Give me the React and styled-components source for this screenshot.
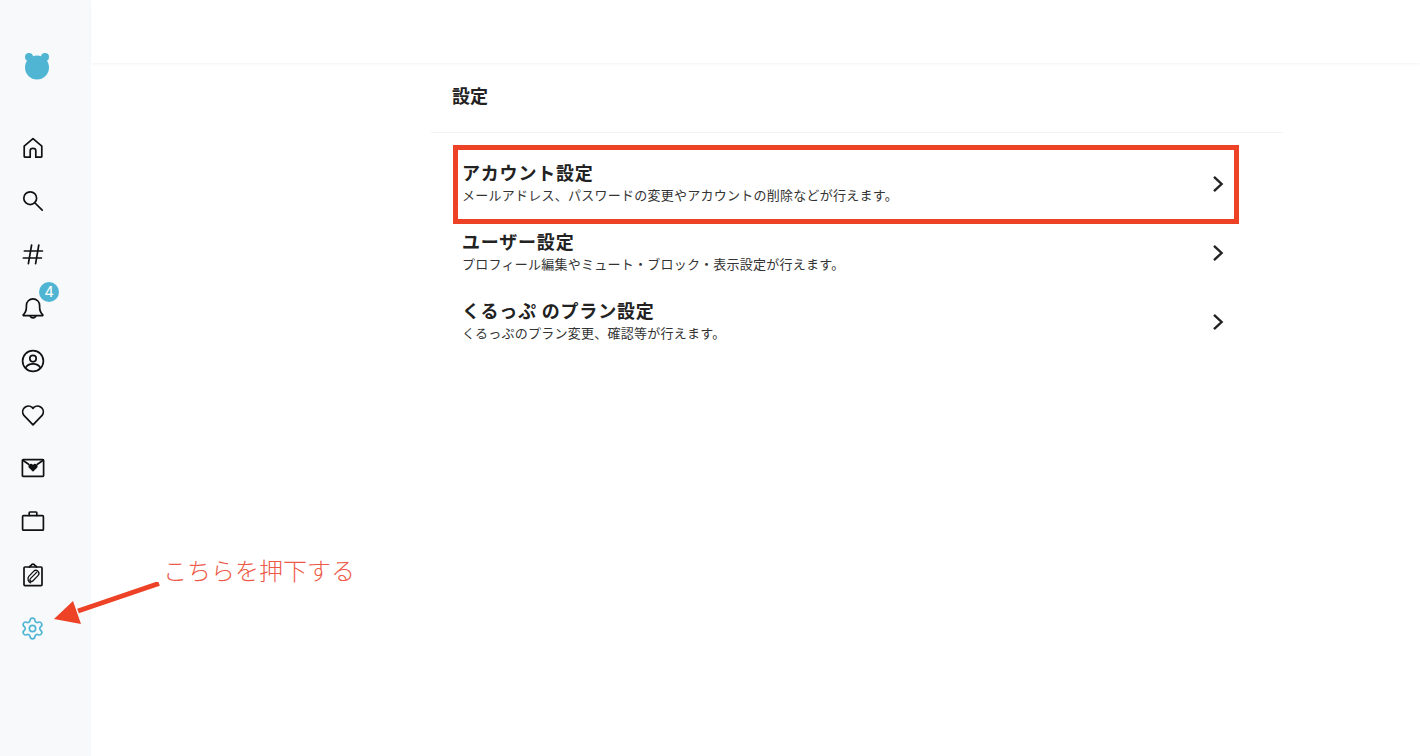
import React from "react";
import styled, { createGlobalStyle } from "styled-components";
import { Settings } from "lucide-react";

const GlobalStyle = createGlobalStyle`
  html, body {
    margin: 0;
    padding: 0;
    background: #ffffff;
  }
  body {
    font-family: "Noto Sans CJK JP", "Noto Sans", sans-serif;
    color: #222222;
  }
`;

const BLUE = "#50b5d3";
const RED = "#ee4227";

const rows = [
  {
    title: "アカウント設定",
    text: "メールアドレス、パスワードの変更やアカウントの削除などが行えます。",
  },
  {
    title: "ユーザー設定",
    text: "プロフィール編集やミュート・ブロック・表示設定が行えます。",
  },
  {
    title: "くるっぷ のプラン設定",
    text: "くるっぷのプラン変更、確認等が行えます。",
  },
];

function Logo() {
  return (
    <svg width="26" height="28" viewBox="0 0 26 28">
      <circle cx="5" cy="5" r="4" fill={BLUE} />
      <circle cx="21" cy="5" r="4" fill={BLUE} />
      <circle cx="13" cy="15.5" r="12" fill={BLUE} />
    </svg>
  );
}

function Icon({ children }) {
  return (
    <svg
      width="24"
      height="24"
      viewBox="0 0 24 24"
      fill="none"
      stroke="#111111"
      strokeWidth="1.7"
      strokeLinecap="round"
      strokeLinejoin="round"
    >
      {children}
    </svg>
  );
}

const navIcons = [
  <Icon key="home">
    <path d="M12 2.6 L3.2 10.2 V20.6 Q3.2 21.2 3.8 21.2 H9.2 V14.6 Q9.2 12.4 12 12.4 Q14.8 12.4 14.8 14.6 V21.2 H20.2 Q20.8 21.2 20.8 20.6 V10.2 Z" />
  </Icon>,
  <Icon key="search">
    <circle cx="9.2" cy="9.2" r="6.4" />
    <path d="M14 14 L21.2 21.2" />
  </Icon>,
  <Icon key="hash">
    <path d="M3.4 9 H21.4 M2.4 16 H20.4 M10.6 3 L7.4 21.6 M17.8 3 L14.6 21.6" />
  </Icon>,
  <Icon key="bell">
    <path d="M2.2 18.8 Q5.4 16 5.4 11 V9.4 A6.6 6.6 0 0 1 18.6 9.4 V11 Q18.6 16 21.8 18.8 Q22 19.6 21.2 19.6 H2.8 Q2 19.6 2.2 18.8 Z" />
    <path d="M9.2 19.8 A2.9 2.9 0 0 0 14.8 19.8" />
  </Icon>,
  <Icon key="user">
    <circle cx="12" cy="12" r="10.4" />
    <circle cx="12" cy="9.6" r="3.2" />
    <path d="M4.6 18.8 Q6.6 14.8 12 14.8 Q17.4 14.8 19.4 18.8" />
  </Icon>,
  <Icon key="heart">
    <path d="M12 21.8 L2.9 12.4 A5.8 5.8 0 0 1 11.2 4.4 L12 5.4 L12.8 4.4 A5.8 5.8 0 0 1 21.1 12.4 Z" />
  </Icon>,
  <Icon key="mail">
    <rect x="1.4" y="3.6" width="21.2" height="16.8" rx="0.8" />
    <path d="M1.8 4.2 L7.6 8.2 M22.2 4.2 L16.4 8.2" />
    <path
      d="M12 15.8 L7.9 11.8 A2.4 2.4 0 0 1 12 9 A2.4 2.4 0 0 1 16.1 11.8 Z"
      fill="#111111"
      stroke="none"
    />
  </Icon>,
  <Icon key="case">
    <rect x="1.6" y="6.6" width="20.8" height="14.6" rx="1" />
    <path d="M8.2 6.4 V3.8 Q8.2 3 9 3 H15 Q15.8 3 15.8 3.8 V6.4" />
  </Icon>,
  <Icon key="clip">
    <rect x="3" y="4" width="18" height="18.6" rx="1" />
    <path d="M8.4 4 Q9 2.6 10 2.6 Q10.6 1.2 12 1.2 Q13.4 1.2 14 2.6 Q15 2.6 15.6 4" />
    <path
      d="M15.6 9.4 L9.4 15.6 A1.6 1.6 0 0 0 11.8 18 L17 12.6 A3 3 0 0 0 12.6 8.4 L7.8 13.4 A4.2 4.2 0 0 0 9.6 19.8"
      strokeWidth="1.3"
    />
  </Icon>,
];

function Chevron() {
  return (
    <svg
      width="24"
      height="24"
      viewBox="0 0 24 24"
      fill="none"
      stroke="#222222"
      strokeWidth="2.4"
    >
      <path d="M8 4.8 L15.6 12 L8 19.2" />
    </svg>
  );
}

export default function App() {
  return (
    <Page>
      <GlobalStyle />
      <Sidebar>
        <LogoBox>
          <Logo />
        </LogoBox>
        <Nav>
          {navIcons.map((icon, i) => (
            <NavItem key={i}>
              {icon}
              {i === 3 && <Badge>4</Badge>}
            </NavItem>
          ))}
          <GearItem>
            <Settings size={25} color={BLUE} strokeWidth={1.6} />
          </GearItem>
        </Nav>
      </Sidebar>
      <Main>
        <TopBar />
        <Content>
          <PageTitle>
            <h1>設定</h1>
          </PageTitle>
          <List>
            {rows.map((row) => (
              <Row key={row.title}>
                <RowText>
                  <RowTitle>{row.title}</RowTitle>
                  <RowSub>{row.text}</RowSub>
                </RowText>
                <Chevron />
              </Row>
            ))}
          </List>
        </Content>
      </Main>

      <Highlight />
      <Note>こちらを押下する</Note>
      <Arrow width="110" height="44" viewBox="0 0 110 44">
        <path d="M105 1.5 L24 29" stroke={RED} strokeWidth="5" fill="none" />
        <path d="M0 37 L19 19 L27 42 Z" fill={RED} />
      </Arrow>
    </Page>
  );
}

const Page = styled.div`
  position: relative;
  display: flex;
  width: 1420px;
  height: 756px;
  overflow: hidden;
  background: #ffffff;
`;
const Sidebar = styled.aside`
  flex: 0 0 91px;
  display: flex;
  flex-direction: column;
  background: #f8f9fb;
`;
const LogoBox = styled.div`
  display: flex;
  height: 121px;
  padding: 52px 0 0 24px;
  box-sizing: border-box;
`;
const Nav = styled.nav`
  display: flex;
  flex-direction: column;
`;
const NavItem = styled.div`
  position: relative;
  display: flex;
  align-items: center;
  height: 53.4px;
  padding-left: 20.5px;
`;
const GearItem = styled(NavItem)`
  padding-left: 20px;
`;
const Badge = styled.span`
  position: absolute;
  top: 1px;
  left: 39px;
  width: 20px;
  height: 20px;
  border-radius: 50%;
  background: ${BLUE};
  color: #ffffff;
  font-family: "Inter", sans-serif;
  font-size: 15px;
  line-height: 20px;
  text-align: center;
`;
const Main = styled.main`
  flex: 1;
  display: flex;
  flex-direction: column;
`;
const TopBar = styled.header`
  height: 63px;
  flex: none;
  background: #ffffff;
  box-shadow: 0 1px 3px rgba(0, 0, 0, 0.05);
`;
const Content = styled.section`
  width: 852px;
  margin-left: 340px;
`;
const PageTitle = styled.div`
  display: flex;
  align-items: center;
  box-sizing: border-box;
  height: 70px;
  padding: 0 0 5px 21px;
  border-bottom: 1px solid #f3f3f3;
  h1 {
    margin: 0;
    font-size: 18px;
    font-weight: 700;
    line-height: 24px;
    color: #222222;
  }
`;
const List = styled.div`
  display: flex;
  flex-direction: column;
  width: 788px;
  margin-left: 21px;
  padding-top: 16px;
`;
const Row = styled.div`
  display: flex;
  align-items: center;
  justify-content: space-between;
  height: 69px;
  padding: 0 10px;
`;
const RowText = styled.div`
  display: flex;
  flex-direction: column;
  gap: 1px;
  padding-bottom: 2px;
`;
const RowTitle = styled.div`
  font-size: 18px;
  font-weight: 700;
  line-height: 24px;
  letter-spacing: 0.8px;
  color: #222222;
`;
const RowSub = styled.div`
  font-size: 13px;
  line-height: 20px;
  letter-spacing: 0.25px;
  color: #333333;
`;
const Highlight = styled.div`
  position: absolute;
  top: 145px;
  left: 453px;
  width: 786px;
  height: 79px;
  box-sizing: border-box;
  border: 5px solid ${RED};
`;
const Note = styled.div`
  position: absolute;
  top: 553px;
  left: 163px;
  font-size: 24px;
  font-weight: 300;
  line-height: 34px;
  color: #ee5a48;
`;
const Arrow = styled.svg`
  position: absolute;
  top: 582px;
  left: 54px;
`;
